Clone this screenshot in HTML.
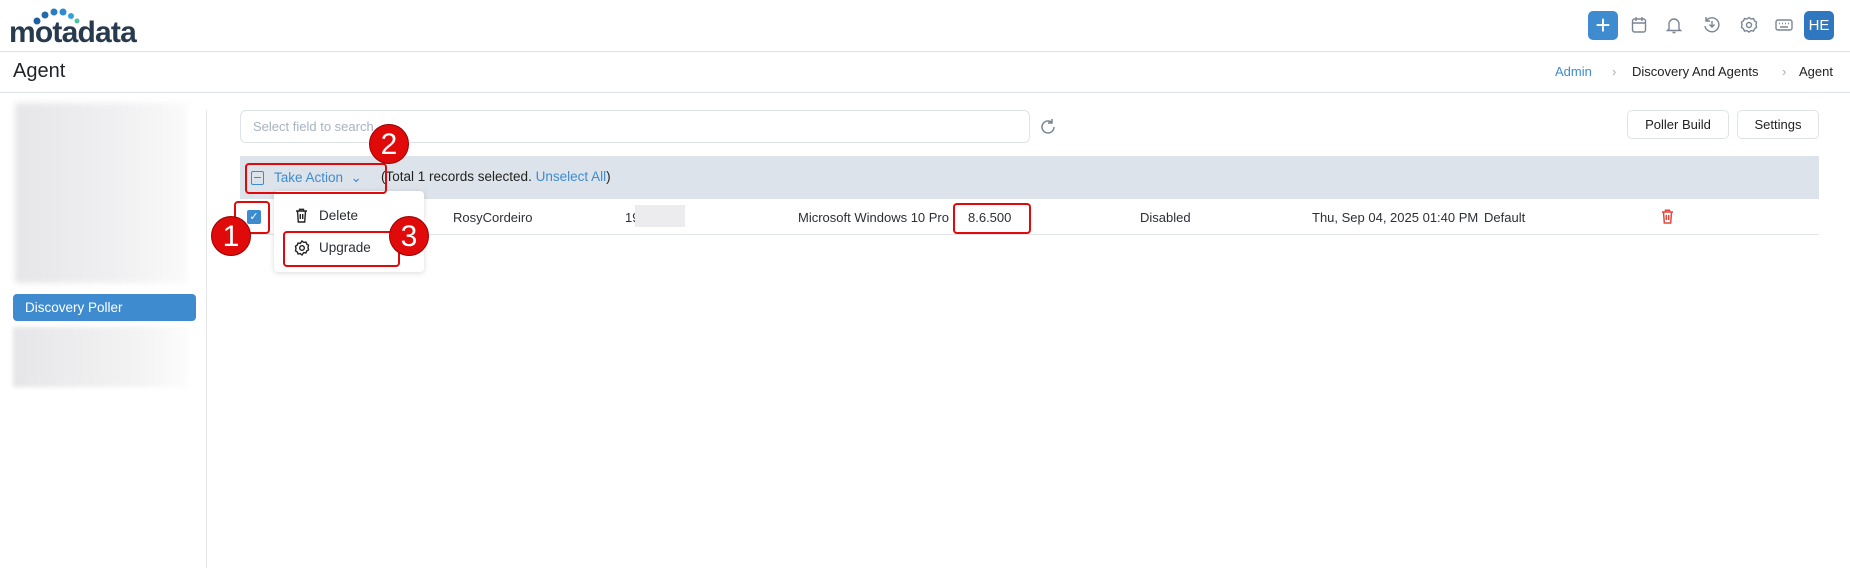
<!DOCTYPE html>
<html><head><meta charset="utf-8"><style>
*{box-sizing:border-box;margin:0;padding:0}
body{width:1850px;height:568px;background:#fff;font-family:"Liberation Sans",sans-serif;color:#2b2f36;position:relative;overflow:hidden;font-size:13px}
.a{position:absolute}
.t{position:absolute;white-space:nowrap}
.red{border:2.5px solid #e10a0a;border-radius:4px}
.circ{position:absolute;width:40px;height:40px;border-radius:50%;background:#e00a0a;color:#fff;font-size:30px;text-align:center;line-height:40px;border:1px solid #900}
.ic{position:absolute;top:16px}
</style></head><body>
<div class="t" style="left:9px;top:16px;font-size:30px;font-weight:bold;color:#283a4e;letter-spacing:-0.8px">motadata</div>
<svg class="a" style="left:28px;top:6px" width="60" height="22"><circle cx="9" cy="15" r="3.5" fill="#1d5f9e"/><circle cx="17" cy="9" r="3.5" fill="#2169ac"/><circle cx="26" cy="6" r="3.5" fill="#2b7cc2"/><circle cx="35" cy="6" r="3.5" fill="#2f8ccf"/><circle cx="43" cy="10" r="3" fill="#35a2d6"/><circle cx="49" cy="15" r="2.5" fill="#4cc3a4"/></svg>
<div class="a" style="left:0;top:51px;width:1850px;height:1px;background:#dde2e8"></div>
<div class="a" style="left:1588px;top:11px;width:30px;height:29px;background:#3f8bd0;border-radius:5px;color:#fff;font-size:26px;text-align:center;line-height:28px">+</div>
<svg class="ic" style="left:1631px" width="16" height="18" fill="none" stroke="#7a8594" stroke-width="1.4"><rect x="1.5" y="3" width="13" height="13" rx="2"/><path d="M1.5 7h13M5 1v4M11 1v4"/></svg>
<svg class="ic" style="left:1666px" width="16" height="18" fill="none" stroke="#7a8594" stroke-width="1.4"><path d="M3 13V8a5 5 0 0110 0v5l1.5 1.5h-13zM6.5 16.5h3"/></svg>
<svg class="ic" style="left:1703px" width="18" height="18" fill="none" stroke="#7a8594" stroke-width="1.4"><path d="M3 5a7 7 0 11-1 5M3 1v4h4M9 5v6M6.5 8.5L9 11l2.5-2.5"/></svg>
<svg class="ic" style="left:1740px" width="18" height="18" fill="none" stroke="#7a8594" stroke-width="1.4"><circle cx="9" cy="9" r="2.5"/><path d="M9 1.5l2 1.5 2.5-.5 1 2.3 2 1.4-.5 2.6.5 2.6-2 1.4-1 2.3-2.5-.5-2 1.5-2-1.5-2.5.5-1-2.3-2-1.4.5-2.6-.5-2.6 2-1.4 1-2.3 2.5.5z"/></svg>
<svg class="ic" style="left:1775px" width="18" height="18" fill="none" stroke="#7a8594" stroke-width="1.4"><rect x="1" y="4" width="16" height="10" rx="2"/><path d="M4 7.5h1M7 7.5h1M10 7.5h1M13 7.5h1M5 11h8"/></svg>
<div class="a" style="left:1804px;top:11px;width:30px;height:29px;background:#2f77bf;border-radius:5px;color:#fff;font-size:15px;text-align:center;line-height:29px">HE</div>
<div class="t" style="left:13px;top:60px;font-size:20px;color:#1f2329">Agent</div>
<div class="t" style="left:1555px;top:64px;color:#3f8bd0">Admin</div>
<div class="t" style="left:1612px;top:64px;color:#aab">›</div>
<div class="t" style="left:1632px;top:64px;color:#222">Discovery And Agents</div>
<div class="t" style="left:1782px;top:64px;color:#aab">›</div>
<div class="t" style="left:1799px;top:64px;color:#222">Agent</div>
<div class="a" style="left:0;top:92px;width:1850px;height:1px;background:#dde2e8"></div>
<div class="a" style="left:15px;top:103px;width:172px;height:180px;background:linear-gradient(90deg,#e6e6e8,#f0f0f2 60%,#fafafa);filter:blur(3px)"></div>
<div class="a" style="left:13px;top:294px;width:183px;height:27px;background:#3f8bd0;border-radius:4px;color:#fff;line-height:27px;padding-left:12px;font-size:13.5px">Discovery Poller</div>
<div class="a" style="left:13px;top:327px;width:174px;height:60px;background:linear-gradient(90deg,#e6e6e8,#f3f3f4 70%,#fcfcfc);filter:blur(2px)"></div>
<div class="a" style="left:206px;top:110px;width:1px;height:458px;background:#e3e6ea"></div>
<div class="a" style="left:240px;top:110px;width:790px;height:33px;border:1px solid #dfe3e8;border-radius:6px"></div>
<div class="t" style="left:253px;top:119px;color:#a9b2c1">Select field to search</div>
<svg class="a" style="left:1039px;top:118px" width="18" height="18" fill="none" stroke="#7a8594" stroke-width="1.5"><path d="M15 9a6 6 0 11-2-4.5M13 1v4h-4"/></svg>
<div class="a" style="left:1627px;top:110px;width:102px;height:29px;border:1px solid #dfe3e8;border-radius:5px;text-align:center;line-height:27px;color:#222">Poller Build</div>
<div class="a" style="left:1737px;top:110px;width:82px;height:29px;border:1px solid #dfe3e8;border-radius:5px;text-align:center;line-height:27px;color:#222">Settings</div>
<div class="a" style="left:240px;top:156px;width:1579px;height:43px;background:#dde3ea"></div>
<div class="a" style="left:251px;top:171px;width:13px;height:14px;border:1.2px solid #3f8bd0;border-radius:2px"></div>
<div class="a" style="left:254px;top:177px;width:7px;height:1.2px;background:#3f8bd0"></div>
<div class="t" style="left:274px;top:170px;color:#3f8bd0;font-size:13.5px">Take Action &nbsp;⌄</div>
<div class="t" style="left:381px;top:169px;font-size:13.5px;color:#222">(Total 1 records selected. <span style="color:#3f8bd0">Unselect All</span>)</div>
<div class="a" style="left:240px;top:234px;width:1579px;height:1px;background:#e1e5ea"></div>
<div class="a" style="left:247px;top:210px;width:14px;height:14px;background:#3f8bd0;border-radius:2px;color:#fff;font-size:11px;text-align:center;line-height:14px">✓</div>
<div class="t" style="left:453px;top:210px">RosyCordeiro</div>
<div class="t" style="left:625px;top:210px">19</div>
<div class="a" style="left:635px;top:205px;width:50px;height:22px;background:#ececee"></div>
<div class="t" style="left:798px;top:210px">Microsoft Windows 10 Pro</div>
<div class="t" style="left:968px;top:210px">8.6.500</div>
<div class="t" style="left:1140px;top:210px">Disabled</div>
<div class="t" style="left:1312px;top:210px">Thu, Sep 04, 2025 01:40 PM</div>
<div class="t" style="left:1484px;top:210px">Default</div>
<svg class="a" style="left:1661px;top:209px" width="13" height="15" fill="none" stroke="#e5453b" stroke-width="1.5"><path d="M1 3h11M4.5 3V1.3h4V3M2.5 3l.8 11h6.4l.8-11M5.3 6v5M7.7 6v5"/></svg>
<div class="a" style="left:274px;top:191px;width:150px;height:81px;background:#fff;border-radius:4px;box-shadow:0 1px 6px rgba(0,0,0,.15)"></div>
<svg class="a" style="left:295px;top:208px" width="13" height="15" fill="none" stroke="#222" stroke-width="1.4"><path d="M1 3h11M4.5 3V1.3h4V3M2.5 3l.8 11h6.4l.8-11M5.3 6v5M7.7 6v5"/></svg>
<div class="t" style="left:319px;top:208px;font-size:13.5px">Delete</div>
<svg class="a" style="left:294px;top:240px" width="16" height="16" fill="none" stroke="#222" stroke-width="1.4"><circle cx="8" cy="8" r="2.3"/><path d="M8 1l1.7 1.4 2.2-.4.8 2 1.8 1.2-.5 2.3.5 2.3-1.8 1.2-.8 2-2.2-.4L8 15l-1.7-1.4-2.2.4-.8-2-1.8-1.2.5-2.3-.5-2.3 1.8-1.2.8-2 2.2.4z"/></svg>
<div class="t" style="left:319px;top:240px;font-size:13.5px">Upgrade</div>
<div class="a red" style="left:245px;top:163px;width:142px;height:31px"></div>
<div class="a red" style="left:234px;top:201px;width:36px;height:33px"></div>
<div class="a red" style="left:283px;top:231px;width:117px;height:36px"></div>
<div class="a red" style="left:953px;top:203px;width:78px;height:31px"></div>
<div class="circ" style="left:369px;top:124px">2</div>
<div class="circ" style="left:211px;top:216px">1</div>
<div class="circ" style="left:389px;top:216px">3</div>
</body></html>
